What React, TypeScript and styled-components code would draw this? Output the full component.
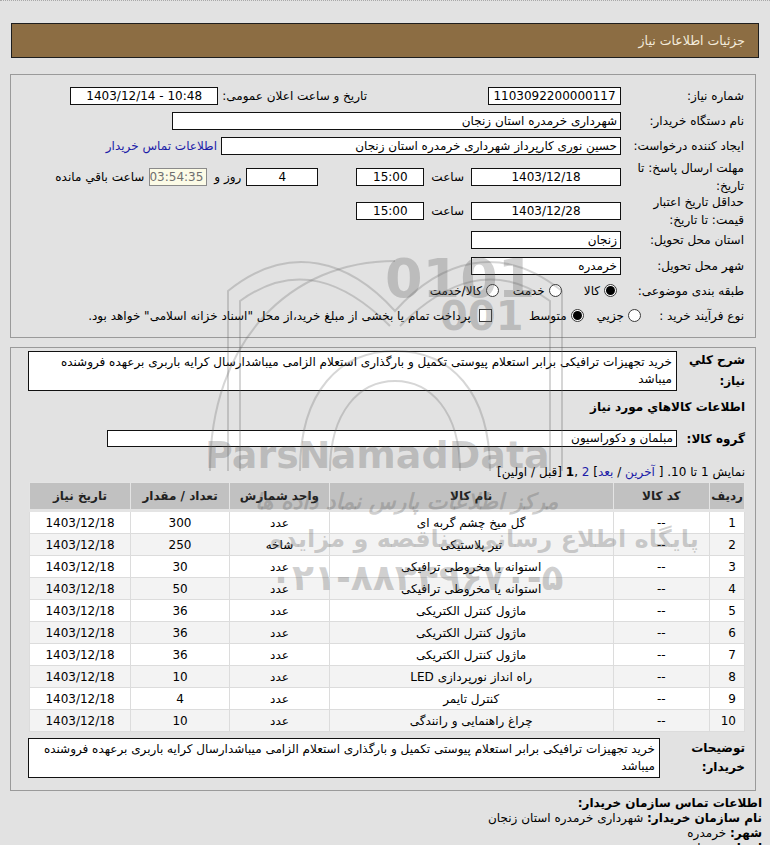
import React from 'react';
import styled, { createGlobalStyle } from 'styled-components';

const GlobalStyle = createGlobalStyle`
  html, body {
    margin: 0;
    padding: 0;
    background: #e2e2e2;
  }
  body {
    font-family: Tahoma, "DejaVu Sans", sans-serif;
    font-size: 12px;
    color: #000;
  }
`;

const Page = styled.div`
  position: relative;
  width: 770px;
  height: 845px;
  overflow: hidden;
  direction: rtl;
  box-sizing: border-box;
  border-top: 1px dotted #a8a8a8;
  padding-top: 22px;
`;

const HeaderBar = styled.div`
  height: 35px;
  margin: 0 11px;
  box-sizing: border-box;
  background: #8c6d43;
  border: 1px solid #1e1e1e;
  color: #f4ecdc;
  font-size: 12.5px;
  display: flex;
  align-items: center;
  padding-right: 13px;
`;

const Panel = styled.div<{ $top: number; $pad: string }>`
  margin: ${(p) => p.$top}px 14px 0 10px;
  border: 1px solid #9a9a9a;
  padding: ${(p) => p.$pad};
`;

const Row = styled.div<{ $h: number }>`
  display: flex;
  align-items: center;
  height: ${(p) => p.$h}px;
`;

const Label = styled.div<{ $w: number; $bold?: boolean }>`
  width: ${(p) => p.$w}px;
  flex-shrink: 0;
  line-height: 18px;
  font-weight: ${(p) => (p.$bold ? 'bold' : 'normal')};
`;

const Field = styled.div<{ $w: number; $h?: number; $align?: string; $timer?: boolean; $ltr?: boolean }>`
  width: ${(p) => p.$w}px;
  height: ${(p) => p.$h || 18}px;
  flex-shrink: 0;
  box-sizing: border-box;
  border: 1px solid ${(p) => (p.$timer ? '#8a8a8a' : '#111')};
  background: ${(p) => (p.$timer ? '#fcfbe6' : '#fff')};
  color: ${(p) => (p.$timer ? '#6f6f6f' : '#000')};
  text-align: ${(p) => p.$align || 'center'};
  direction: ${(p) => (p.$ltr ? 'ltr' : 'rtl')};
  padding: 0 3px;
  line-height: ${(p) => (p.$h || 18) - 2}px;
  white-space: nowrap;
  overflow: hidden;
`;

const Text = styled.span<{ $mr?: number }>`
  margin-right: ${(p) => p.$mr || 0}px;
  white-space: nowrap;
`;

const Link = styled.a<{ $mr?: number }>`
  margin-right: ${(p) => p.$mr || 0}px;
  color: #1c1ca8;
  text-decoration: none;
  white-space: nowrap;
`;

const Option = styled.label<{ $mr?: number }>`
  display: inline-flex;
  align-items: center;
  margin-right: ${(p) => p.$mr || 0}px;
  white-space: nowrap;
`;

const RadioDot = styled.span<{ $on?: boolean }>`
  width: 13px;
  height: 13px;
  box-sizing: border-box;
  border-radius: 50%;
  border: 1px solid #3a3a3a;
  background: #fff;
  margin-left: 4px;
  display: inline-flex;
  align-items: center;
  justify-content: center;
  &::after {
    content: '';
    width: 9px;
    height: 9px;
    border-radius: 50%;
    background: ${(p) => (p.$on ? '#000' : 'transparent')};
  }
`;

const CheckBox = styled.span`
  width: 13px;
  height: 13px;
  box-sizing: border-box;
  border: 1px solid #3a3a3a;
  background: #fff;
  margin-left: 8px;
  display: inline-block;
`;

const Memo = styled.div<{ $w: number }>`
  width: ${(p) => p.$w}px;
  height: 40px;
  box-sizing: border-box;
  border: 1px solid #111;
  background: #fff;
  padding: 2px 4px;
  line-height: 17px;
  text-align: right;
`;

const SectionTitle = styled.div<{ $mt: number }>`
  margin-top: ${(p) => p.$mt}px;
  font-weight: bold;
  line-height: 16px;
`;

const Paging = styled.div`
  margin-top: 17px;
  line-height: 16px;
  b { font-weight: bold; }
`;

const Table = styled.table`
  margin-top: 2px;
  width: 716px;
  border-collapse: collapse;
  background: #ececec;
  border: 1px solid #cfcfcf;
`;

const Th = styled.th<{ $w: number }>`
  width: ${(p) => p.$w}px;
  height: 24px;
  background: #c1c1c1;
  color: #222;
  font-weight: bold;
  font-size: 12px;
  border: 1px solid #e4e4e4;
  border-bottom-width: 3px;
  text-align: center;
`;

const Tr = styled.tr<{ $alt?: boolean }>`
  background: ${(p) => (p.$alt ? '#f3f3f3' : '#fff')};
`;

const Td = styled.td`
  height: 21px;
  padding: 0 4px;
  border: 1px solid #dcdcdc;
  text-align: center;
  white-space: nowrap;
`;

const TdNum = styled(Td)`
  text-align: right;
  padding-right: 8px;
`;

const Contact = styled.div`
  margin-top: 5px;
  padding-right: 8px;
  line-height: 15px;
  b { font-weight: bold; }
`;

const Watermark = styled.div`
  position: absolute;
  inset: 0;
  pointer-events: none;
  direction: ltr;
`;

const WmText = styled.div<{ $x: number; $y: number; $size: number; $italic?: boolean }>`
  position: absolute;
  left: ${(p) => p.$x}px;
  top: ${(p) => p.$y}px;
  font-size: ${(p) => p.$size}px;
  font-weight: bold;
  font-style: ${(p) => (p.$italic ? 'italic' : 'normal')};
  color: rgba(90, 90, 90, 0.28);
  white-space: nowrap;
  font-family: "DejaVu Sans", sans-serif;
`;

const LogoSvg = styled.svg`
  position: absolute;
  left: 180px;
  top: 220px;
`;

const items = [
  ['1', '--', 'گل میخ چشم گربه ای', 'عدد', '300', '1403/12/18'],
  ['2', '--', 'تیر پلاستیکی', 'شاخه', '250', '1403/12/18'],
  ['3', '--', 'استوانه یا مخروطی ترافیکی', 'عدد', '30', '1403/12/18'],
  ['4', '--', 'استوانه یا مخروطی ترافیکی', 'عدد', '50', '1403/12/18'],
  ['5', '--', 'ماژول کنترل الکتریکی', 'عدد', '36', '1403/12/18'],
  ['6', '--', 'ماژول کنترل الکتریکی', 'عدد', '36', '1403/12/18'],
  ['7', '--', 'ماژول کنترل الکتریکی', 'عدد', '36', '1403/12/18'],
  ['8', '--', 'راه انداز نورپردازی LED', 'عدد', '10', '1403/12/18'],
  ['9', '--', 'کنترل تایمر', 'عدد', '4', '1403/12/18'],
  ['10', '--', 'چراغ راهنمایی و رانندگی', 'عدد', '10', '1403/12/18'],
];

const desc =
  'خرید تجهیزات ترافیکی برابر استعلام پیوستی تکمیل و بارگذاری استعلام الزامی میباشدارسال کرایه باربری برعهده فروشنده میباشد';

export default function App() {
  return (
    <Page>
      <GlobalStyle />
      <HeaderBar>جزئیات اطلاعات نیاز</HeaderBar>

      <Panel $top={16} $pad="8px 11px 9px 10px">
        <Row $h={25}>
          <Label $w={123}>شماره نیاز:</Label>
          <Field $w={133}>1103092200000117</Field>
          <Text $mr={121}>تاریخ و ساعت اعلان عمومی:</Text>
          <Field $w={148} $ltr style={{ marginRight: 4 }}>1403/12/14 - 10:48</Field>
        </Row>
        <Row $h={25}>
          <Label $w={123}>نام دستگاه خریدار:</Label>
          <Field $w={449} $align="right">شهرداری خرمدره استان زنجان</Field>
        </Row>
        <Row $h={26}>
          <Label $w={123}>ایجاد کننده درخواست:</Label>
          <Field $w={400} $align="right">حسین نوری کارپرداز شهرداری خرمدره استان زنجان</Field>
          <Link $mr={4}>اطلاعات تماس خریدار</Link>
        </Row>
        <Row $h={35}>
          <Label $w={123}>مهلت ارسال پاسخ: تا<br />تاریخ:</Label>
          <Field $w={150}>1403/12/18</Field>
          <Text $mr={7}>ساعت</Text>
          <Field $w={68} style={{ marginRight: 7 }}>15:00</Field>
          <Field $w={72} style={{ marginRight: 38 }}>4</Field>
          <Text $mr={5}>روز و</Text>
          <Field $w={58} $timer style={{ marginRight: 7 }}>03:54:35</Field>
          <Text $mr={5}>ساعت باقي مانده</Text>
        </Row>
        <Row $h={33}>
          <Label $w={123}>حداقل تاریخ اعتبار<br />قیمت: تا تاریخ:</Label>
          <Field $w={150}>1403/12/28</Field>
          <Text $mr={7}>ساعت</Text>
          <Field $w={68} style={{ marginRight: 7 }}>15:00</Field>
        </Row>
        <Row $h={26}>
          <Label $w={123}>استان محل تحویل:</Label>
          <Field $w={150} $align="right">زنجان</Field>
        </Row>
        <Row $h={25}>
          <Label $w={123}>شهر محل تحویل:</Label>
          <Field $w={150} $align="right">خرمدره</Field>
        </Row>
        <Row $h={25}>
          <Label $w={127}>طبقه بندی موضوعی:</Label>
          <Option><RadioDot $on />کالا</Option>
          <Option $mr={22}><RadioDot />خدمت</Option>
          <Option $mr={14}><RadioDot />کالا/خدمت</Option>
        </Row>
        <Row $h={25}>
          <Label $w={103}>نوع فرآیند خرید :</Label>
          <Option><RadioDot />جزیي</Option>
          <Option $mr={13}><RadioDot $on />متوسط</Option>
          <Option $mr={37}><CheckBox />پرداخت تمام یا بخشی از مبلغ خرید،از محل "اسناد خزانه اسلامی" خواهد بود.</Option>
        </Row>
      </Panel>

      <Panel $top={9} $pad="3px 10px 12px 17px">
        <Row $h={40}>
          <Label $w={68} $bold style={{ lineHeight: '21px' }}>شرح کلي<br />نیاز:</Label>
          <Memo $w={650}>{desc}</Memo>
        </Row>
        <SectionTitle $mt={8}>اطلاعات کالاهاي مورد نیاز</SectionTitle>
        <Row $h={17} style={{ marginTop: 15 }}>
          <Label $w={68} $bold>گروه کالا:</Label>
          <Field $w={570} $h={17} $align="right">مبلمان و دکوراسیون</Field>
        </Row>
        <Paging>
          نمایش 1 تا 10. [ <Link>آخرین</Link> / <Link>بعد</Link>] <Link>2</Link> ,<b>1</b> [قبل / اولین]
        </Paging>
        <Table>
          <thead>
            <tr>
              <Th $w={30}>ردیف</Th>
              <Th $w={97}>کد کالا</Th>
              <Th $w={287}>نام کالا</Th>
              <Th $w={99}>واحد شمارش</Th>
              <Th $w={99}>تعداد / مقدار</Th>
              <Th $w={99}>تاریخ نیاز</Th>
            </tr>
          </thead>
          <tbody>
            {items.map((r, i) => (
              <Tr key={r[0]} $alt={i % 2 === 1}>
                <TdNum>{r[0]}</TdNum>
                <Td>{r[1]}</Td>
                <Td>{r[2]}</Td>
                <Td>{r[3]}</Td>
                <Td>{r[4]}</Td>
                <Td>{r[5]}</Td>
              </Tr>
            ))}
          </tbody>
        </Table>
        <Row $h={40} style={{ marginTop: 6 }}>
          <Label $w={85} $bold style={{ lineHeight: '19px' }}>توضیحات<br />خریدار:</Label>
          <Memo $w={633}>{desc}</Memo>
        </Row>
      </Panel>

      <Contact>
        <b>اطلاعات تماس سازمان خریدار:</b>
        <br />
        <b>نام سازمان خریدار:</b> شهرداری خرمدره استان زنجان
        <br />
        <b>شهر:</b> خرمدره
        <br />
        <b>استان:</b> زنجان
      </Contact>

      <Watermark>
        <LogoSvg width="430" height="260" viewBox="0 0 430 260" fill="none" stroke="rgba(90,90,90,0.25)" strokeWidth="2">
          <path d="M48 250 V70 C110 20 170 40 215 90 C260 40 320 20 382 70 V250" />
          <path d="M60 250 V80 C115 40 165 60 210 105" />
          <path d="M370 250 V80 C315 40 265 60 220 105" />
          <path d="M120 250 C120 170 160 130 215 130 C270 130 310 170 310 250" />
          <path d="M150 250 C150 190 180 160 215 160 C250 160 280 190 280 250" />
          <path d="M30 250 C30 120 110 40 215 40" />
        </LogoSvg>
        <WmText $x={385} $y={246} $size={54}>0101</WmText>
        <WmText $x={440} $y={292} $size={40}>001</WmText>
        <WmText $x={205} $y={432} $size={38}>ParsNamadData</WmText>
        <WmText $x={255} $y={488} $size={22} $italic>مرکز اطلاعات پارس نماد داده ها</WmText>
        <WmText $x={270} $y={524} $size={24}>پایگاه اطلاع رسانی مناقصه و مزایده</WmText>
        <WmText $x={270} $y={556} $size={36}>۰۲۱-۸۸۳۴۹۶۷۰-۵</WmText>
      </Watermark>
    </Page>
  );
}
